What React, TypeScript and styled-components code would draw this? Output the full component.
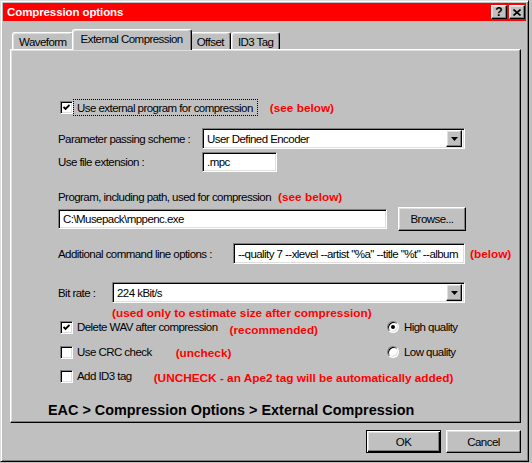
import React from 'react';
import styled, { createGlobalStyle, css } from 'styled-components';

const GlobalStyle = createGlobalStyle`
  html, body {
    margin: 0;
    padding: 0;
    background: #c0c0c0;
  }
  body {
    font-family: "Liberation Sans", Arial, sans-serif;
    font-size: 11.5px;
    letter-spacing: -0.55px;
    color: #000;
  }
  * {
    box-sizing: border-box;
  }
`;

// win98 bevels
const raised = css`
  border: 1px solid;
  border-color: #fff #000 #000 #fff;
  box-shadow: inset -1px -1px #808080, inset 1px 1px #dfdfdf;
`;

const sunken = css`
  background: #fff;
  border: 1px solid;
  border-color: #808080 #fff #fff #808080;
  box-shadow: inset 1px 1px #000, inset -1px -1px #dfdfdf;
`;

const Window = styled.div`
  width: 529px;
  height: 462px;
  background: #c0c0c0;
  border: 1px solid;
  border-color: #dfdfdf #000 #000 #dfdfdf;
  box-shadow: inset 1px 1px #fff, inset -1px -1px #808080;
  padding: 2px;
  display: flex;
  flex-direction: column;
`;

const TitleBar = styled.div`
  height: 18px;
  background: #ff0000;
  display: flex;
  align-items: center;
  justify-content: space-between;
  padding: 0 1px 0 4px;
`;

const TitleText = styled.span`
  color: #fff;
  font-weight: bold;
  font-size: 11.5px;
  letter-spacing: -0.1px;
`;

const TitleButtons = styled.div`
  display: flex;
  gap: 2px;
`;

const TitleBtn = styled.div`
  ${raised};
  width: 16px;
  height: 14px;
  background: #c0c0c0;
  display: flex;
  align-items: center;
  justify-content: center;
  font-weight: bold;
  font-size: 12px;
  letter-spacing: 0;
  line-height: 1;
`;

const Body = styled.div`
  padding: 8px 0 0 7px;
  display: flex;
  flex-direction: column;
`;

const TabStrip = styled.div`
  display: flex;
  align-items: flex-end;
  height: 20px;
  padding-left: 2px;
`;

const Tab = styled.div<{ $active?: boolean }>`
  position: relative;
  height: ${p => (p.$active ? 21 : 17)}px;
  margin: ${p => (p.$active ? '0 -2px -1px -2px' : '0')};
  padding: ${p => (p.$active ? '0 8px 2px' : '1px 6px 0')};
  z-index: ${p => (p.$active ? 2 : 1)};
  background: #c0c0c0;
  display: flex;
  align-items: center;
  white-space: nowrap;
  border-top: 1px solid #fff;
  border-left: 1px solid #fff;
  border-right: 1px solid #000;
  border-radius: 3px 3px 0 0;
  box-shadow: inset -1px 0 #808080, inset 1px 1px #dfdfdf;
`;

const Panel = styled.div`
  width: 511px;
  height: 374px;
  border: 1px solid;
  border-color: #fff #000 #000 #fff;
  box-shadow: inset -1px -1px #808080, inset 1px 1px #dfdfdf;
  padding-left: 47px;
  display: flex;
  flex-direction: column;
`;

const Row = styled.div<{ $h: number; $mt?: number }>`
  display: flex;
  align-items: center;
  height: ${p => p.$h}px;
  margin-top: ${p => p.$mt ?? 0}px;
  white-space: nowrap;
`;

const Label = styled.span<{ $w?: number }>`
  flex: none;
  width: ${p => (p.$w ? `${p.$w}px` : 'auto')};
`;

const Note = styled.span<{ $ml?: number; $mt?: number }>`
  color: #ff0000;
  font-weight: bold;
  font-size: 11.8px;
  letter-spacing: 0;
  margin-left: ${p => p.$ml ?? 0}px;
  margin-top: ${p => p.$mt ?? 0}px;
`;

const Combo = styled.div<{ $w: number }>`
  ${sunken};
  width: ${p => p.$w}px;
  height: 21px;
  display: flex;
  align-items: center;
  justify-content: space-between;
  padding: 0 2px 0 4px;
`;

const ComboButton = styled.span`
  ${raised};
  background: #c0c0c0;
  width: 16px;
  height: 17px;
  display: flex;
  align-items: center;
  justify-content: center;
`;

const Field = styled.div<{ $w: number; $h?: number }>`
  ${sunken};
  width: ${p => p.$w}px;
  height: ${p => p.$h ?? 21}px;
  display: flex;
  align-items: center;
  padding-left: 4px;
  overflow: hidden;
`;

const Button = styled.div<{ $w: number; $h: number; $default?: boolean; $ml?: number }>`
  width: ${p => p.$w}px;
  height: ${p => p.$h}px;
  margin-left: ${p => p.$ml ?? 0}px;
  background: #c0c0c0;
  display: flex;
  align-items: center;
  justify-content: center;
  ${p =>
    p.$default
      ? css`
          border: 1px solid #000;
          box-shadow: inset 1px 1px #fff, inset -1px -1px #000, inset -2px -2px #808080, inset 2px 2px #dfdfdf;
        `
      : raised};
`;

const Box = styled.span`
  ${sunken};
  flex: none;
  width: 13px;
  height: 13px;
  margin-left: 2px;
  display: flex;
  align-items: center;
  justify-content: center;
`;

const CheckText = styled.span<{ $focus?: boolean }>`
  border: 1px dotted ${p => (p.$focus ? '#000' : 'transparent')};
  padding: 0 4px 0 3px;
  height: 17px;
  display: flex;
  align-items: center;
`;

const OptionGrid = styled.div`
  display: grid;
  grid-template-columns: 329px auto;
  align-items: center;
`;

const Radio = styled.span`
  flex: none;
  width: 12px;
  height: 12px;
  border-radius: 50%;
  background: #fff;
  border: 1px solid;
  border-color: #808080 #fff #fff #808080;
  box-shadow: inset 1px 1px #000, inset -1px -1px #dfdfdf;
  display: flex;
  align-items: center;
  justify-content: center;
  margin-right: 5px;
`;

const Dot = styled.span`
  width: 4px;
  height: 4px;
  border-radius: 50%;
  background: #000;
`;

const Breadcrumb = styled.div`
  font-weight: bold;
  font-size: 14.4px;
  letter-spacing: 0;
  margin: 18px 0 0 -10px;
  height: 18px;
  line-height: 18px;
`;

const Footer = styled.div`
  width: 511px;
  display: flex;
  justify-content: flex-end;
  margin-top: 7px;
`;

const Arrow = () => (
  <svg width="7" height="4" viewBox="0 0 7 4">
    <polygon points="0,0 7,0 3.5,4" fill="#000" />
  </svg>
);

const Check = () => (
  <svg width="7" height="7" viewBox="0 0 7 7">
    <polyline points="0.5,3 2.5,5 6.5,1" fill="none" stroke="#000" strokeWidth="1.8" />
  </svg>
);

const CloseGlyph = () => (
  <svg width="8" height="7" viewBox="0 0 8 7">
    <path d="M0.5 0.5 L7.5 6.5 M7.5 0.5 L0.5 6.5" stroke="#000" strokeWidth="1.6" />
  </svg>
);

const Checkbox: React.FC<{ checked?: boolean; label: string; focus?: boolean }> = ({ checked, label, focus }) => (
  <>
    <Box>{checked && <Check />}</Box>
    <CheckText $focus={focus}>{label}</CheckText>
  </>
);

const tabs = ['Waveform', 'External Compression', 'Offset', 'ID3 Tag'];

export default function App() {
  return (
    <>
      <GlobalStyle />
      <Window>
        <TitleBar>
          <TitleText>Compression options</TitleText>
          <TitleButtons>
            <TitleBtn>?</TitleBtn>
            <TitleBtn>
              <CloseGlyph />
            </TitleBtn>
          </TitleButtons>
        </TitleBar>
        <Body>
          <TabStrip>
            {tabs.map(t => (
              <Tab key={t} $active={t === 'External Compression'}>
                {t}
              </Tab>
            ))}
          </TabStrip>
          <Panel>
            <Row $h={17} $mt={49}>
              <Checkbox checked focus label="Use external program for compression" />
              <Note $ml={12}>(see below)</Note>
            </Row>
            <Row $h={21} $mt={12}>
              <Label $w={144}>Parameter passing scheme :</Label>
              <Combo $w={263}>
                User Defined Encoder
                <ComboButton>
                  <Arrow />
                </ComboButton>
              </Combo>
            </Row>
            <Row $h={20} $mt={3}>
              <Label $w={144}>Use file extension :</Label>
              <Field $w={75} $h={20}>.mpc</Field>
            </Row>
            <Row $h={14} $mt={18}>
              <Label>Program, including path, used for compression</Label>
              <Note $ml={7}>(see below)</Note>
            </Row>
            <Row $h={24} $mt={3}>
              <Field $w={329} $h={20}>C:\Musepack\mppenc.exe</Field>
              <Button $w={68} $h={24} $ml={11}>Browse...</Button>
            </Row>
            <Row $h={21} $mt={12}>
              <Label $w={175}>Additional command line options :</Label>
              <Field $w={232}>--quality 7 --xlevel --artist "%a" --title "%t" --album</Field>
              <Note $ml={5}>(below)</Note>
            </Row>
            <Row $h={21} $mt={18}>
              <Label $w={54}>Bit rate :</Label>
              <Combo $w={353}>
                224 kBit/s
                <ComboButton>
                  <Arrow />
                </ComboButton>
              </Combo>
            </Row>
            <Row $h={14} $mt={3}>
              <Label $w={54} />
              <Note>(used only to estimate size after compression)</Note>
            </Row>
            <OptionGrid>
              <Row $h={14}>
                <Checkbox checked label="Delete WAV after compression" />
                <Note $ml={7} $mt={5}>(recommended)</Note>
              </Row>
              <Row $h={14}>
                <Radio>
                  <Dot />
                </Radio>
                High quality
              </Row>
              <Row $h={14} $mt={11}>
                <Checkbox label="Use CRC check" />
                <Note $ml={19} $mt={2}>(uncheck)</Note>
              </Row>
              <Row $h={14} $mt={11}>
                <Radio />
                Low quality
              </Row>
            </OptionGrid>
            <Row $h={14} $mt={10}>
              <Checkbox label="Add ID3 tag" />
              <Note $ml={17} $mt={3}>(UNCHECK - an Ape2 tag will be automatically added)</Note>
            </Row>
            <Breadcrumb>EAC &gt; Compression Options &gt; External Compression</Breadcrumb>
          </Panel>
          <Footer>
            <Button $w={75} $h={23} $default>OK</Button>
            <Button $w={75} $h={23} $ml={5}>Cancel</Button>
          </Footer>
        </Body>
      </Window>
    </>
  );
}
